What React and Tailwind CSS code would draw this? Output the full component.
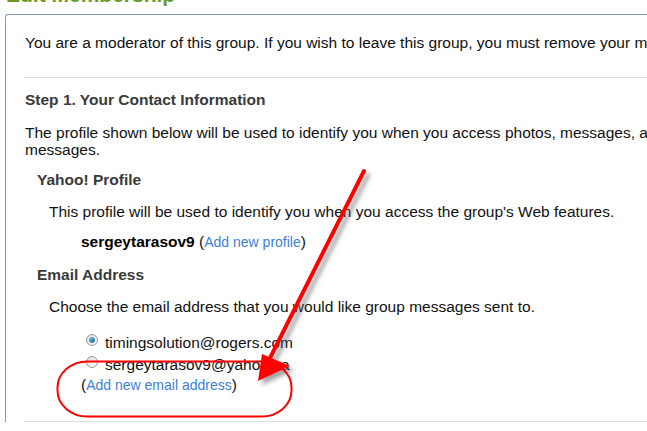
const LINK = 'text-[14px] text-[#3d7fd6]'

function Radio({ checked }) {
  return (
    <span className="relative mr-[7px] inline-flex h-[12px] w-[12px] -translate-y-[3px] items-center justify-center rounded-full border border-[#9a9a9a] bg-gradient-to-br from-[#dcdcdc] to-white">
      {checked && <span className="h-[6px] w-[6px] rounded-full bg-gradient-to-br from-[#7cc4ec] to-[#1f5f96]" />}
    </span>
  )
}

function Annotation() {
  return (
    <svg className="pointer-events-none absolute left-0 top-0" width="647" height="431" viewBox="0 0 647 431">
      <defs>
        <filter id="shadow" x="-20%" y="-20%" width="140%" height="140%">
          <feDropShadow dx="4" dy="4" stdDeviation="2" floodColor="#555" floodOpacity="0.55" />
        </filter>
      </defs>
      <g filter="url(#shadow)">
        <line x1="364" y1="171" x2="270" y2="358" stroke="#ff0000" strokeWidth="4" strokeLinecap="round" />
        <polygon points="258,381 262,354 290,366" fill="#ff0000" />
      </g>
      <rect x="57.5" y="361.5" width="234" height="55" rx="30" ry="26" fill="none" stroke="#ff0000" strokeWidth="2" />
    </svg>
  )
}

export default function App() {
  return (
    <div className="relative h-[431px] w-[647px] overflow-hidden bg-white font-['Liberation_Sans',Arial,sans-serif] text-[15.5px] text-[#111]">
      <h1 className="-mt-[16px] ml-[6px] h-[21px] whitespace-nowrap text-[21px] font-bold leading-[21px] text-[#6a9a1f]">Edit Membership</h1>

      <div className="ml-[5px] mt-[9px] w-[760px] whitespace-nowrap rounded-tl-[3px] border-l border-t border-[#7f9db9] pl-[18px] pt-[19px]">
        <p className="ml-[1px] leading-[18px]">
          You are a moderator of this group. If you wish to leave this group, you must remove your moderator status first.
        </p>

        <div className="mt-[25px] h-px bg-[#d6dee7]" />

        <h2 className="ml-[1px] mt-[13px] font-bold leading-[18px] text-[#3a3a3a]">Step 1. Your Contact Information</h2>
        <p className="ml-[1px] mt-[15px] leading-[17px]">
          The profile shown below will be used to identify you when you access photos, messages, and other group features.
          <br />
          messages.
        </p>

        <h3 className="ml-[13px] mt-[13px] font-bold leading-[18px] text-[#3a3a3a]">Yahoo! Profile</h3>
        <p className="ml-[25px] mt-[14px] leading-[18px]">
          This profile will be used to identify you when you access the group's Web features.
        </p>
        <p className="ml-[57px] mt-[12px] leading-[18px]">
          <b className="text-black">sergeytarasov9</b> (<a className={LINK}>Add new profile</a>)
        </p>

        <h3 className="ml-[13px] mt-[15px] font-bold leading-[18px] text-[#3a3a3a]">Email Address</h3>
        <p className="ml-[25px] mt-[14px] leading-[18px]">
          Choose the email address that you would like group messages sent to.
        </p>

        <div className="ml-[62px] mt-[18px] flex items-center leading-[18px]">
          <Radio checked />
          <span>timingsolution@rogers.com</span>
        </div>
        <div className="ml-[62px] mt-[4px] flex items-center leading-[18px]">
          <Radio />
          <span>sergeytarasov9@yahoo.ca</span>
        </div>
        <p className="ml-[57px] mt-[2px] leading-[18px]">
          (<a className={LINK}>Add new email address</a>)
        </p>

        <div className="mt-[27px] h-px bg-[#d6dee7]" />
      </div>

      <Annotation />
    </div>
  )
}
